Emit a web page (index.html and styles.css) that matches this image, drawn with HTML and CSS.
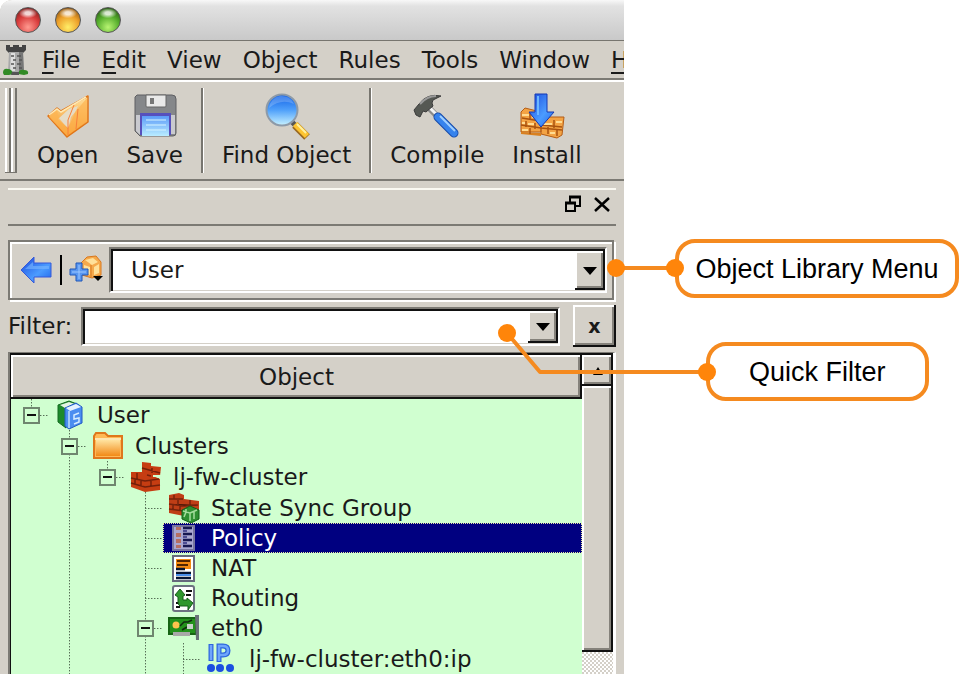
FILE: index.html
```html
<!DOCTYPE html>
<html lang="en">
<head>
<meta charset="utf-8">
<title>Object tree</title>
<link rel="stylesheet" href="styles.css">
</head>
<body>
<svg class="defs" aria-hidden="true" width="0" height="0">
  <defs>
    <linearGradient id="gold" x1="0" y1="0" x2="0" y2="1"><stop offset="0" stop-color="#ffe3a0"/><stop offset="1" stop-color="#f28a18"/></linearGradient>
    <linearGradient id="blue" x1="0" y1="0" x2="1" y2="1"><stop offset="0" stop-color="#1a48dc"/><stop offset=".6" stop-color="#4b9cff"/><stop offset="1" stop-color="#2064e8"/></linearGradient>
    <linearGradient id="lens" x1="0" y1="0" x2="0" y2="1"><stop offset="0" stop-color="#0f5fe6"/><stop offset=".5" stop-color="#4fa0fa"/><stop offset="1" stop-color="#c8f2ff"/></linearGradient>
    <linearGradient id="sheet" x1="0" y1="0" x2="0" y2="1"><stop offset="0" stop-color="#5c9bf8"/><stop offset="1" stop-color="#b9ecff"/></linearGradient>
  </defs>
</svg>
<div class="stage">
  <main class="window">
    <header class="titlebar">
      <button class="light red" aria-label="Close window"></button>
      <button class="light amber" aria-label="Minimize window"></button>
      <button class="light green" aria-label="Zoom window"></button>
    </header>

    <nav class="menubar">
      <svg class="tower" width="26" height="32" viewBox="0 0 26 32" aria-hidden="true">
        <path d="M3 1h4v2h3V1h6v2h3V1h4v5l-3 3H6L3 6z" fill="#444"/>
        <path d="M6 8h14l1 20H5z" fill="#a9a9a9"/>
        <path d="M8 9h4v18H7z" fill="#dedede"/>
        <path d="M16 8h4l1 20h-5z" fill="#777"/>
        <path d="M8 12h3m3 0h4M10 16h3m3 0h3M8 20h3m3 0h4M10 24h3m3 0h3" stroke="#555" stroke-width="1.5"/>
        <path d="M0 29q0-5 5-4 4 0 5 5l-4 1H1zM15 30q1-5 6-4 5 0 4 4l-4 1z" fill="#318a25"/>
        <path d="M9 28h7v3H8z" fill="#555"/>
      </svg>
      <a href="#"><u>F</u>ile</a>
      <a href="#"><u>E</u>dit</a>
      <a href="#">View</a>
      <a href="#">Object</a>
      <a href="#">Rules</a>
      <a href="#">Tools</a>
      <a href="#">Window</a>
      <a href="#"><u>H</u></a>
    </nav>

    <div class="toolbar">
      <span class="grip"></span>
      <button class="tool">
        <svg width="46" height="46" viewBox="0 0 46 46" aria-hidden="true">
          <path d="M3 23l9-8 4 3L43 3v26L22 44z" fill="url(#gold)" stroke="#e0761a" stroke-width="1.5" stroke-linejoin="round"/>
          <path d="M13 26l11-10 9-3-10 22z" fill="#e6dcc6"/>
          <path d="M4 24l8-7 2 8 9 11 3-12L42 5v23L22 43z" fill="#fdb350" opacity=".7"/>
          <path d="M4 22l8-6 4 3L41 4" fill="none" stroke="#ffe9b4" stroke-width="1.5"/>
          <path d="M23 42V27l6-15M31 36l2-20" fill="none" stroke="#f77f3a"/>
        </svg>
        Open</button>
      <button class="tool">
        <svg width="46" height="46" viewBox="0 0 46 46" aria-hidden="true">
          <path d="M5 2h35q4 0 4 4v34q0 3-3 3H8l-5-5V4z" fill="#85878a" stroke="#5e5f62"/>
          <path d="M4 22v16l4 4h3V22zM39 22h4v19h-4z" fill="#c9cacf"/>
          <path d="M14 2h20v11q0 1-1 1H15q-1 0-1-1z" fill="#e9e9e9" stroke="#666"/>
          <path d="M18 5h4v6h-4z" fill="#777"/>
          <path d="M8 20h31v22H8z" fill="#5650bd"/>
          <path d="M10 23h27v20H10z" fill="url(#sheet)"/>
          <path d="M14 27h20M14 32h20M14 37h20" stroke="#d8f6ff"/>
        </svg>
        Save</button>
      <span class="rule"></span>
      <button class="tool">
        <svg width="46" height="46" viewBox="0 0 46 46" aria-hidden="true">
          <path d="M26 27l5 5" stroke="#555" stroke-width="5"/>
          <path d="M31 32l12 12" stroke="#9b6a22" stroke-width="8"/>
          <path d="M31 31l12 12" stroke="#fdc431" stroke-width="6"/>
          <path d="M33 31l9 9" stroke="#fff0a0" stroke-width="2"/>
          <circle cx="18" cy="17" r="15.500" fill="url(#lens)" stroke="#8d9aa8" stroke-width="2"/>
          <path d="M5 15a13 13 0 0 1 25-4q-13-6-25 4z" fill="#fff" opacity=".2"/>
        </svg>
        Find Object</button>
      <span class="rule"></span>
      <button class="tool">
        <svg width="46" height="46" viewBox="0 0 46 46" aria-hidden="true">
          <path d="M14 14l13 13" stroke="#8a8a8a" stroke-width="6"/>
          <path d="M15 14l12 12" stroke="#f2f2f2" stroke-width="3"/>
          <path d="M24 24l16 16" stroke="#174aa8" stroke-width="9" stroke-linecap="round"/>
          <path d="M24 24l16 16" stroke="#3683ed" stroke-width="7" stroke-linecap="round"/>
          <path d="M26 23l15 15" stroke="#a0d0ff" stroke-width="2"/>
          <path d="M0 17l5-6Q13 0 27 3l-8 4q-2 3 0 6l-7 6-3-1-3 6-4-2z" fill="#555853" stroke="#3b3b3b"/>
          <path d="M6 11Q13 3 22 3" fill="none" stroke="#999" stroke-width="2"/>
        </svg>
        Compile</button>
      <button class="tool">
        <svg width="46" height="46" viewBox="5 0 46 46" aria-hidden="true">
          <path d="M2 19l4-4 16 4v20H2zM22 22l5 2 18 0-2 18-5 3-16-4z" fill="#f3a344" stroke="#b45d16"/>
          <path d="M2 39l20 1v3L2 41z" fill="#d9801f"/>
          <path d="M3 25l18 3 2 4 20 2M2 32l20 3 21 2" stroke="#a9530f" stroke-width="1.500" fill="none"/>
          <path d="M11 20v7M7 28v6M16 30v6M11 35v6M35 27v8M29 34v7M38 37v6" stroke="#a9530f" stroke-width="1.500"/>
          <path d="M3 22h7M13 24h8M3 30h3M9 31h6M24 31h9M37 29h6M3 37h6M31 40h5" stroke="#ffdc92" stroke-width="2"/>
          <path d="M16 1h12v18h7L22 34 10 19h6z" fill="url(#blue)" stroke="#1438b4"/>
          <path d="M19 3v19" stroke="#6cb7ff" stroke-width="2"/>
        </svg>
        Install</button>
    </div>

    <section class="dock">
      <div class="dock-title">
        <button class="flat" aria-label="Float panel">
          <svg width="18" height="18" viewBox="0 0 18 18" aria-hidden="true"><path d="M6 7V2h10v9h-4M2 8h9v8H2z" fill="none" stroke="#000" stroke-width="2"/><path d="M5 2h12M1 8h11" stroke="#000" stroke-width="3"/></svg>
        </button>
        <button class="flat" aria-label="Close panel">
          <svg width="18" height="18" viewBox="0 0 18 18" aria-hidden="true"><path d="M2 3l14 13M16 3L2 16" stroke="#000" stroke-width="2.500"/></svg>
        </button>
      </div>

      <div class="library">
        <button class="flat" aria-label="Back">
          <svg width="32" height="30" viewBox="0 0 32 30" aria-hidden="true"><path d="M1 15L14 2v6h17v14H14v6z" fill="url(#blue)" stroke="#3658d8"/><path d="M5 14l8-7v4h16v3z" fill="#7ab8ff" opacity=".6"/></svg>
        </button>
        <span class="bar"></span>
        <button class="flat" aria-label="New object">
          <svg width="34" height="30" viewBox="0 0 34 30" aria-hidden="true">
            <path d="M11 8l6-6 9-1 5 6v13l-9 3-10-3z" fill="#f5a94c" stroke="#d9781e"/>
            <path d="M15 5l8-2 5 4-6 3zM14 10l6 2v8l-6-3zM24 12l5-3v9l-5 2z" fill="#ffe09a"/>
            <path d="M21 10v12" stroke="#d9781e"/>
            <path d="M6 8h6v6h6v6h-6v6H6v-6H0v-6h6z" fill="#5896f0" stroke="#1f56b8"/>
            <path d="M9 10v14M2 17h14" stroke="#9cc8ff"/>
            <path d="M23 21h10l-5 5z" fill="#000"/>
          </svg>
        </button>
        <div class="sunken combo">
          <select aria-label="Object library"><option>User</option></select>
          <span class="raised arrow"><svg width="14" height="8" viewBox="0 0 14 8" aria-hidden="true"><path d="M0 0h14L7 8z"/></svg></span>
        </div>
      </div>

      <div class="filter">
        <label for="filter">Filter:</label>
        <div class="sunken combo">
          <input id="filter" type="text">
          <button class="raised arrow" aria-label="Filter history"><svg width="14" height="8" viewBox="0 0 14 8" aria-hidden="true"><path d="M0 0h14L7 8z"/></svg></button>
        </div>
        <button class="raised clear">x</button>
      </div>

      <div class="tree">
        <div class="pane">
          <div class="raised heading">Object</div>
          <ul class="root stub">
            <li>
              <div class="row"><button class="toggle" aria-label="Collapse"></button><span class="dots"></span>
                <span class="item"><svg width="32" height="30" viewBox="0 0 32 30" aria-hidden="true"><path d="M4 5L15 1l8 3v4L12 12v16l-8-6z" fill="#1d8a2c" stroke="#146b20"/><path d="M6 5l9-3 6 2-10 4z" fill="#e4f4e4"/><path d="M11 8l11-5 6 4v16l-13 6-4-3z" fill="#4a8df0" stroke="#2058c4"/><path d="M12 8l10-4 5 3-11 4z" fill="#e6f2ff"/><path d="M15 11v17" stroke="#bfe0ff" stroke-width="1.500"/><path d="M25 13l-5 2v4l5-1v4l-5 2" fill="none" stroke="#d4ecff" stroke-width="1.500"/></svg>User</span></div>
              <ul>
                <li>
                  <div class="row"><button class="toggle" aria-label="Collapse"></button><span class="dots"></span>
                    <span class="item"><svg width="32" height="30" viewBox="0 0 32 30" aria-hidden="true"><path d="M2 27V5l2-3h9l3 3h14v22z" fill="#ffb956" stroke="#df771c" stroke-width="2"/><path d="M4 9h24v16H4z" fill="url(#gold)"/><path d="M3 8h26" stroke="#ffe5b0" stroke-width="2"/></svg>Clusters</span></div>
                  <ul class="stub">
                    <li>
                      <div class="row"><button class="toggle" aria-label="Collapse"></button><span class="dots"></span>
                        <span class="item"><svg width="32" height="30" viewBox="0 0 32 30" aria-hidden="true"><path d="M12 0l9 1v3l10 1-1 9-7 0 7 3v11l-15 2L1 25V10l11 0z" fill="#c63d12"/><path d="M12 6l18 5M1 16l14 3 14-2M1 21l14 4 15-2M7 11v6M11 18v6M5 17v5M21 19v5M17 13l4 1M22 6v5" stroke="#74200a" fill="none" stroke-width="1.500"/><path d="M23 14l8 0" stroke="#cfffcf" stroke-width="2"/></svg>lj-fw-cluster</span></div>
                      <ul>
                        <li><div class="row leaf"><span class="dots"></span>
                          <span class="item"><svg width="32" height="30" viewBox="0 0 32 30" aria-hidden="true"><path d="M1 2l10-2 5 2v4l15 2v10l-15 5-15-3z" fill="#bf3e16"/><path d="M1 6h14M1 11l15 2 14-1M1 16l15 2M6 2v4M10 7v5M5 12v4M12 13v5M22 7v5" stroke="#76230c" stroke-width="1.500"/><path d="M14 17l8-4 9 4v9l-8 4-9-4z" fill="#2f8f32" stroke="#136018"/><path d="M15 18l7 2v8M22 20l7-3M18 16v3l-2 5M26 18v8" fill="none" stroke="#a3dd9c" stroke-width="1.500"/></svg>State Sync Group</span></div></li>
                        <li><div class="row leaf"><span class="dots"></span>
                          <span class="item selected"><svg width="32" height="30" viewBox="0 0 32 30" aria-hidden="true"><path d="M5 3h21v24H5z" fill="#a9a7d0" stroke="#77759f" stroke-width="2"/><path d="M8 4h5v3H8zM8 10h5v4H8zM8 16h5v4H8zM8 22h5v3H8z" fill="#b56f62"/><path d="M15 5h9M15 11h9M15 17h9M15 23h9" stroke="#161650" stroke-width="2.500"/><path d="M15 8h4M15 14h4M15 20h4" stroke="#303080" stroke-width="1.500"/></svg>Policy</span></div></li>
                        <li><div class="row leaf"><span class="dots"></span>
                          <span class="item"><svg width="32" height="30" viewBox="0 0 32 30" aria-hidden="true"><path d="M5 3h21v25H5z" fill="#fff" stroke="#666a7c" stroke-width="2"/><path d="M8 6h15v10H8z" fill="#f28a12"/><path d="M9 8h13M9 12h11" stroke="#512400" stroke-width="2"/><path d="M8 16h9M8 20h15M8 25h15" stroke="#061430" stroke-width="2.500"/><path d="M8 22h15" stroke="#4b8fe8" stroke-width="2"/></svg>NAT</span></div></li>
                        <li><div class="row leaf"><span class="dots"></span>
                          <span class="item"><svg width="32" height="30" viewBox="0 0 32 30" aria-hidden="true"><rect x="5" y="3" width="21" height="25" rx="2" fill="#fff" stroke="#6c7280" stroke-width="2"/><path d="M18 8h6M18 12h5M8 20h4M8 24h4" stroke="#111" stroke-width="2"/><path d="M7 12l5-6 5 6-2 1v4h4v-2l6 5-5 7v-4h-8q-2-1-2-4v-5z" fill="#2f972d" stroke="#145c18"/></svg>Routing</span></div></li>
                        <li>
                          <div class="row"><button class="toggle" aria-label="Collapse"></button><span class="dots"></span>
                            <span class="item"><svg width="32" height="30" viewBox="0 0 32 30" aria-hidden="true"><path d="M1 5h27v16H1z" fill="#23911c" stroke="#176414" stroke-width="2"/><path d="M27 2h4v25h-3z" fill="#697078"/><circle cx="8" cy="12" r="3.500" fill="#ffc34d"/><path d="M12 13l4-4h4l4-2M14 17l5-3" stroke="#102c10" stroke-width="1.500" fill="none"/><path d="M19 11h6v5h-6z" fill="#c7d2ca"/><path d="M5 19h17v4H5z" fill="#a8a8a8"/></svg>eth0</span></div>
                          <ul>
                            <li><div class="row leaf"><span class="dots"></span>
                              <span class="item"><svg width="32" height="30" viewBox="0 0 32 30" aria-hidden="true"><path d="M5 0v17M13 18V2h4q5 0 5 4.500t-5 4.500h-3" fill="none" stroke="#2e66de" stroke-width="5"/><path d="M5 1v15M13 17V2h4q5 0 5 4.500t-5 4.500h-3" fill="none" stroke="#6fa6fb" stroke-width="2.500"/><g fill="#1b4fe0"><circle cx="5" cy="24" r="4"/><circle cx="14" cy="24" r="4"/><circle cx="24" cy="24" r="4"/></g></svg>lj-fw-cluster:eth0:ip</span></div></li>
                          </ul>
                        </li>
                      </ul>
                    </li>
                  </ul>
                </li>
              </ul>
            </li>
          </ul>
        </div>
        <div class="scrollbar">
          <button class="raised up" aria-label="Scroll up"><svg width="10" height="8" viewBox="0 0 10 8" aria-hidden="true"><path d="M5 0l5 8H0z"/></svg></button>
          <span class="raised thumb"></span>
          <span class="track"></span>
        </div>
      </div>
    </section>
  </main>

  <aside class="notes">
    <p class="note">Object Library Menu</p>
    <p class="note short">Quick Filter</p>
  </aside>

  <svg class="leaders" width="210" height="130" viewBox="0 0 210 130" aria-hidden="true">
    <path d="M116 17h58M7 82l33 39h167" fill="none" stroke="#f58a1f" stroke-width="4" stroke-linejoin="round"/>
    <g fill="#ff850a"><circle cx="116" cy="17" r="9"/><circle cx="175" cy="17" r="9"/><circle cx="7" cy="82" r="9"/><circle cx="207" cy="121" r="9"/></g>
  </svg>
</div>
</body>
</html>
```
FILE: styles.css
```css
* { box-sizing: border-box; }

body {
  margin: 0;
  background: #fff;
  color: #1a1a1a;
  font: 23px/28px "DejaVu Sans", sans-serif;
  overflow: hidden;
}

.defs { position: absolute; }

button, select, input {
  margin: 0;
  padding: 0;
  border: 0;
  background: none;
  color: inherit;
  font: inherit;
  appearance: none;
}

svg { display: block; flex: none; overflow: visible; }

.stage {
  position: relative;
  display: grid;
  grid-template-columns: 65% 35%;
  min-height: 100vh;
}

.window {
  display: flex;
  flex-direction: column;
  min-width: 0;
  overflow: hidden;
  background: #d4d0c8;
  border-top-left-radius: 12px;
}

/* Title bar */
.titlebar {
  display: flex;
  align-items: center;
  gap: 14px;
  height: 41px;
  padding-left: 15px;
  background: linear-gradient(#f8f8f8, #e2e2e2 15%, #c9c9c9);
  border-bottom: 1px solid #77756f;
  border-top-left-radius: 12px;
}

.light {
  width: 26px;
  height: 26px;
  border: 1px solid #555;
  border-radius: 50%;
}
.red { background: radial-gradient(ellipse 9px 5px at 50% 22%, #fffc 30%, #fff0), radial-gradient(circle at 50% 80%, #ff9a90, #d93c3c 50%, #5c1512); }
.amber { background: radial-gradient(ellipse 9px 5px at 50% 22%, #fffc 30%, #fff0), radial-gradient(circle at 50% 80%, #ffee68, #eda02a 50%, #6b3a08); }
.green { background: radial-gradient(ellipse 9px 5px at 50% 22%, #fffc 30%, #fff0), radial-gradient(circle at 50% 80%, #b8f472, #55ad2c 50%, #173d0a); }

/* Menu bar */
.menubar {
  display: flex;
  align-items: center;
  gap: 21px;
  height: 39px;
  padding-left: 3px;
  border-bottom: 2px solid #7c7a74;
  white-space: nowrap;
}
.menubar a { color: inherit; text-decoration: none; }
.menubar .tower { margin-right: -8px; }
.menubar u { text-decoration-thickness: 2px; text-underline-offset: 4px; }

/* Toolbar */
.toolbar {
  display: flex;
  align-items: center;
  height: 101px;
  padding-left: 5px;
  border-top: 2px solid #fff;
  border-bottom: 2px solid #7c7a74;
  white-space: nowrap;
}
.grip {
  width: 12px;
  height: 85px;
  margin-right: 6px;
  background: linear-gradient(90deg, #fff 0 2px, #d4d0c8 2px 4px, #77756f 4px 6px, #fff 6px 8px, #d4d0c8 8px 10px, #77756f 10px 12px);
  border-bottom: 1px solid #77756f;
}
.rule {
  width: 3px;
  height: 85px;
  margin: 0 4px;
  border-left: 2px solid #77756f;
  border-right: 1px solid #fff;
}
.tool {
  display: flex;
  flex-direction: column;
  align-items: center;
  gap: 2px;
  padding: 0 14px;
}

/* Dock */
.dock {
  display: flex;
  flex: 1;
  flex-direction: column;
  padding: 7px 8px 0;
}
.dock-title {
  display: flex;
  justify-content: flex-end;
  align-items: center;
  gap: 11px;
  height: 38px;
  margin-bottom: 14px;
  padding: 0 5px 6px 0;
  border-top: 2px solid #faf9f2;
  border-bottom: 2px solid #7c7a74;
}

.sunken {
  border: 2px solid;
  border-color: #7c7a74 #fff #fff #7c7a74;
  box-shadow: inset 2px 2px #111, inset -1px -1px #d4d0c8;
  background: #fff;
}
.raised {
  background: #d4d0c8;
  box-shadow: inset -2px -2px #111, inset 2px 2px #fff, inset -4px -4px #85827b;
}

.library {
  display: flex;
  align-items: center;
  height: 60px;
  margin-right: 2px;
  padding: 0 5px 0 10px;
  border: 2px solid #7c7a74;
  box-shadow: inset 2px 2px #fff, 2px 2px #fff;
}
.library .bar {
  width: 2px;
  height: 30px;
  margin: 0 8px;
  background: #000;
}
.library .combo { height: 46px; margin-left: 5px; }
.library select { padding-left: 20px; }

.combo {
  display: flex;
  flex: 1;
  min-width: 0;
}
.combo select, .combo input {
  flex: 1;
  min-width: 0;
  outline: 0;
}
.arrow {
  display: flex;
  justify-content: center;
  align-items: center;
  width: 30px;
  margin: 2px 0 1px;
}

.filter {
  display: flex;
  align-items: center;
  margin: 5px 0;
}
.filter .combo { height: 39px; margin: 0 13px 0 9px; }
.clear {
  width: 43px;
  height: 42px;
  font-size: 19px;
  font-weight: bold;
}

/* Tree */
.tree {
  display: flex;
  flex: 1;
  padding: 2px 0 0 1px;
  border: solid #7c7a74;
  border-width: 1px 0 0 2px;
  border-right: 3px solid #fff;
  background: #111;
}
.pane {
  flex: 1;
  min-width: 0;
  background: #d0ffd0;
}
.heading {
  height: 44px;
  line-height: 44px;
  text-align: center;
}
.tree ul {
  margin: 0;
  padding: 1px 0 0 38px;
  list-style: none;
  background: repeating-linear-gradient(#567056 0 1px, #9cbf9c 1px 2px, transparent 2px 3px) 58px 0 / 1px 100% no-repeat;
}
.tree .root { padding-left: 0; background-position-x: 20px; }
.tree .stub { background-size: 1px 8px; }

.row {
  display: flex;
  align-items: center;
  height: 30px;
  padding-left: 12px;
}
.toggle {
  width: 17px;
  height: 17px;
  border: 2px solid #6f866f;
  background: linear-gradient(#111, #111) center / 9px 2px no-repeat #d0ffd0;
}
.dots {
  width: 9px;
  height: 1px;
  background: repeating-linear-gradient(90deg, #567056 0 1px, #9cbf9c 1px 2px, transparent 2px 3px);
}
.leaf { padding-left: 20px; }
.leaf .dots { width: 18px; }
.item {
  display: flex;
  flex: 1;
  align-items: center;
  gap: 11px;
  height: 30px;
  padding-left: 5px;
  white-space: nowrap;
}
.selected {
  background: #000080;
  outline: 1px dotted #e8e8a0;
  outline-offset: -1px;
  color: #fff;
}

.scrollbar {
  display: flex;
  flex-direction: column;
  width: 31px;
}
.up {
  display: flex;
  justify-content: center;
  align-items: center;
  height: 31px;
}
.thumb { flex: 1; }
.track {
  height: 22px;
  background: repeating-conic-gradient(#fff 0 25%, #d4d0c8 0 50%) 0 0 / 4px 4px;
}

/* Notes beside the window */
.notes {
  display: flex;
  flex-direction: column;
  align-items: flex-start;
  gap: 44px;
  padding: 239px 1px 0 51px;
}
.note {
  width: 100%;
  margin: 0;
  padding: 13px 0 11px;
  border: 4px solid #f58a1f;
  border-radius: 20px;
  color: #000;
  font: 27px/27px "Liberation Sans", sans-serif;
  text-align: center;
  white-space: nowrap;
}
.short {
  width: auto;
  margin-left: 31px;
  padding: 13px 39px 11px;
}
.leaders {
  position: absolute;
  top: 251px;
  left: calc(65% - 124px);
  pointer-events: none;
}
```
